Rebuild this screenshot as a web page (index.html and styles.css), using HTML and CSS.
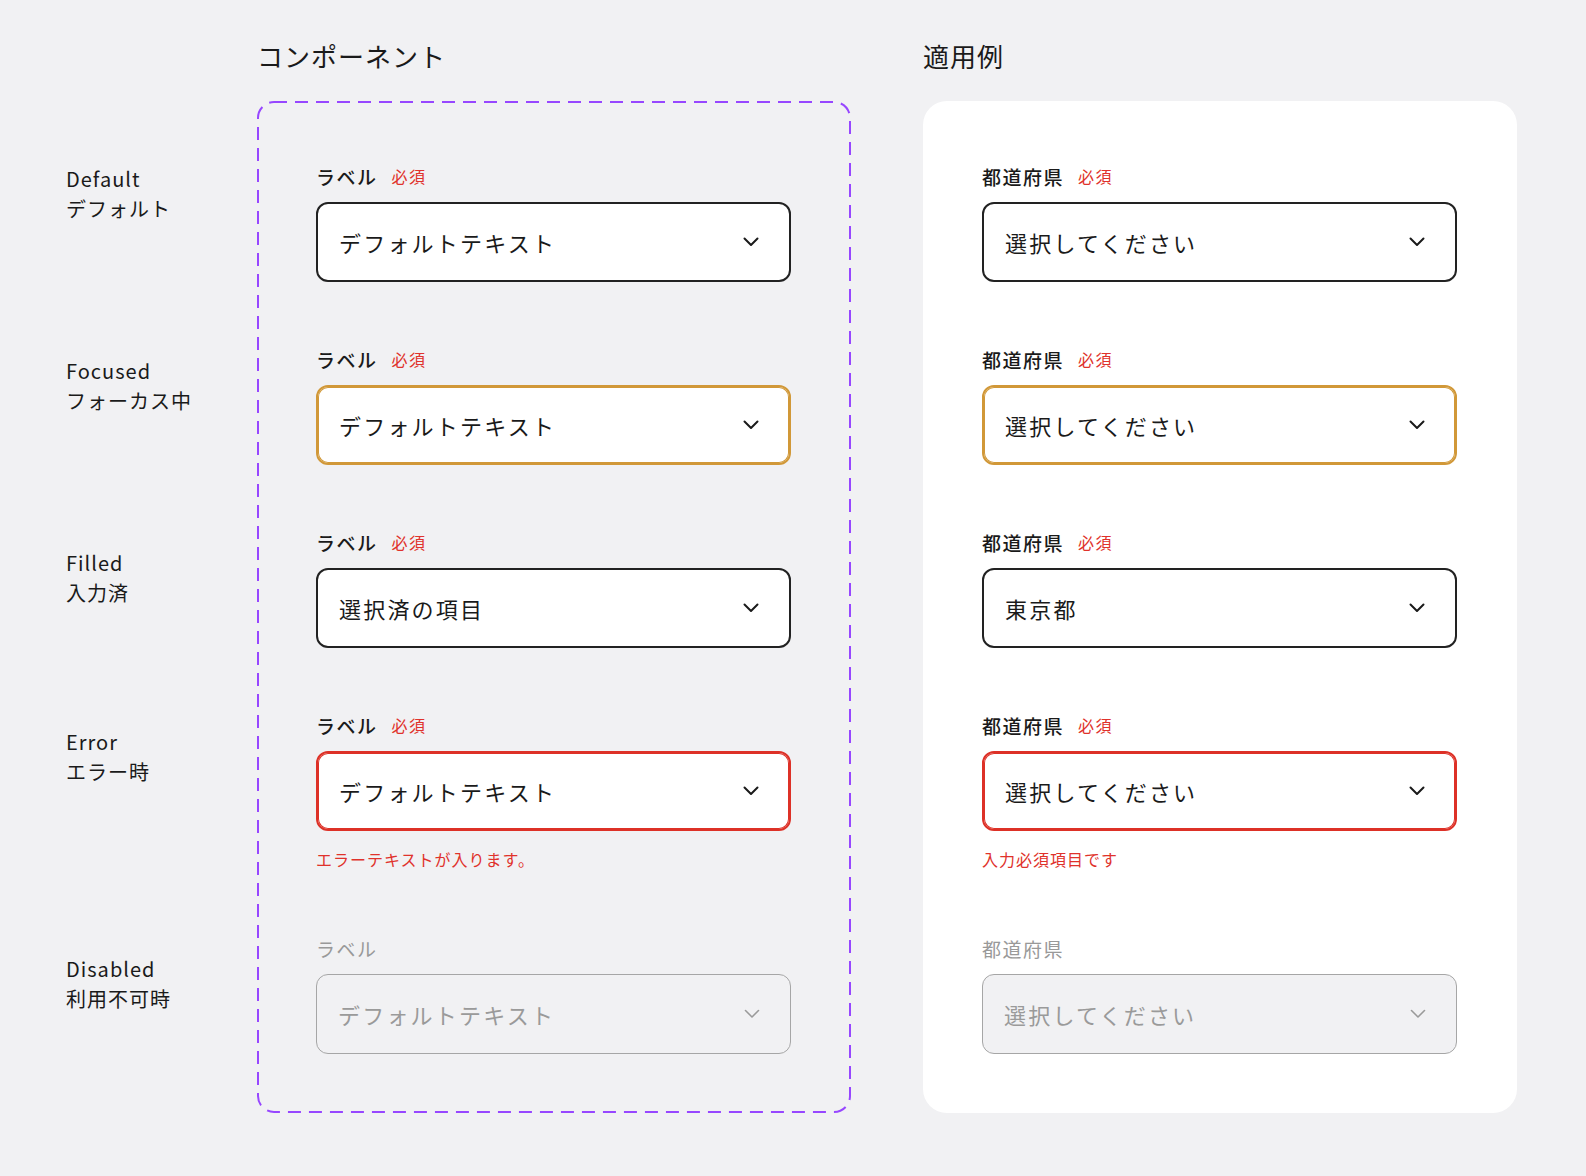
FILE: index.html
```html
<!DOCTYPE html>
<html lang="ja">
<head>
  <meta charset="UTF-8" />
  <meta name="viewport" content="width=device-width, initial-scale=1.0" />
  <title>Select - States</title>
  <link rel="stylesheet" href="styles.css">
</head>
<body>
  <div class="page">

    <div class="states">
      <div class="state state-default">
        <div>Default</div>
        <div>デフォルト</div>
      </div>
      <div class="state state-focused">
        <div>Focused</div>
        <div>フォーカス中</div>
      </div>
      <div class="state state-filled">
        <div>Filled</div>
        <div>入力済</div>
      </div>
      <div class="state state-error">
        <div>Error</div>
        <div>エラー時</div>
      </div>
      <div class="state">
        <div>Disabled</div>
        <div>利用不可時</div>
      </div>
    </div>

    <section class="column">
      <h2 class="column-title">コンポーネント</h2>
      <div class="frame frame-component">
        <!-- component set outline -->
        <svg class="frame-outline" width="594" height="1012"><rect x="1" y="1" width="592" height="1010" rx="16" ry="16" /></svg>
        <div class="field">
          <div class="field-label">ラベル<span class="required">必須</span></div>
          <div class="select">
            <span class="select-text">デフォルトテキスト</span>
            <svg class="chevron" width="16" height="10" viewBox="0 0 16 10"><path d="M1.5 1.5 L8 8 L14.5 1.5" /></svg>
          </div>
        </div>
        <div class="field">
          <div class="field-label">ラベル<span class="required">必須</span></div>
          <div class="select is-focused">
            <span class="select-text">デフォルトテキスト</span>
            <svg class="chevron" width="16" height="10" viewBox="0 0 16 10"><path d="M1.5 1.5 L8 8 L14.5 1.5" /></svg>
          </div>
        </div>
        <div class="field">
          <div class="field-label">ラベル<span class="required">必須</span></div>
          <div class="select">
            <span class="select-text">選択済の項目</span>
            <svg class="chevron" width="16" height="10" viewBox="0 0 16 10"><path d="M1.5 1.5 L8 8 L14.5 1.5" /></svg>
          </div>
        </div>
        <div class="field">
          <div class="field-label">ラベル<span class="required">必須</span></div>
          <div class="select is-error">
            <span class="select-text">デフォルトテキスト</span>
            <svg class="chevron" width="16" height="10" viewBox="0 0 16 10"><path d="M1.5 1.5 L8 8 L14.5 1.5" /></svg>
          </div>
          <div class="error-text">エラーテキストが入ります。</div>
        </div>
        <div class="field is-disabled">
          <div class="field-label">ラベル</div>
          <div class="select">
            <span class="select-text">デフォルトテキスト</span>
            <svg class="chevron" width="16" height="10" viewBox="0 0 16 10"><path d="M1.5 1.5 L8 8 L14.5 1.5" /></svg>
          </div>
        </div>
      </div>
    </section>

    <section class="column">
      <h2 class="column-title">適用例</h2>
      <div class="frame frame-example">
        <div class="field">
          <div class="field-label">都道府県<span class="required">必須</span></div>
          <div class="select">
            <span class="select-text">選択してください</span>
            <svg class="chevron" width="16" height="10" viewBox="0 0 16 10"><path d="M1.5 1.5 L8 8 L14.5 1.5" /></svg>
          </div>
        </div>
        <div class="field">
          <div class="field-label">都道府県<span class="required">必須</span></div>
          <div class="select is-focused">
            <span class="select-text">選択してください</span>
            <svg class="chevron" width="16" height="10" viewBox="0 0 16 10"><path d="M1.5 1.5 L8 8 L14.5 1.5" /></svg>
          </div>
        </div>
        <div class="field">
          <div class="field-label">都道府県<span class="required">必須</span></div>
          <div class="select">
            <span class="select-text">東京都</span>
            <svg class="chevron" width="16" height="10" viewBox="0 0 16 10"><path d="M1.5 1.5 L8 8 L14.5 1.5" /></svg>
          </div>
        </div>
        <div class="field">
          <div class="field-label">都道府県<span class="required">必須</span></div>
          <div class="select is-error">
            <span class="select-text">選択してください</span>
            <svg class="chevron" width="16" height="10" viewBox="0 0 16 10"><path d="M1.5 1.5 L8 8 L14.5 1.5" /></svg>
          </div>
          <div class="error-text">入力必須項目です</div>
        </div>
        <div class="field is-disabled">
          <div class="field-label">都道府県</div>
          <div class="select">
            <span class="select-text">選択してください</span>
            <svg class="chevron" width="16" height="10" viewBox="0 0 16 10"><path d="M1.5 1.5 L8 8 L14.5 1.5" /></svg>
          </div>
        </div>
      </div>
    </section>

  </div>
</body>
</html>
```

FILE: styles.css
```css
body {
  margin: 0;
  background: #f1f1f3;
  color: #1a1a1a;
  font-family: "Noto Sans CJK JP", "Noto Sans", sans-serif;
}
.page {
  display: flex;
  align-items: flex-start;
  padding: 37px 0 0 66px;
}

/* state names on the left */
.states {
  width: 191px;
  margin-top: 127px;
  display: flex;
  flex-direction: column;
}
.state {
  font-size: 20px;
  line-height: 30px;
  letter-spacing: 1px;
  color: #1a1a1a;
}
.state-default,
.state-focused {
  height: 192px;
}
.state-filled {
  height: 179px;
}
.state-error {
  height: 227px;
}

.column {
  width: 594px;
}
.column + .column {
  margin-left: 72px;
}
.column-title {
  margin: 0 0 26px;
  font-size: 26px;
  line-height: 38px;
  font-weight: 400;
  letter-spacing: 1px;
}

.frame {
  box-sizing: border-box;
  display: flex;
  flex-direction: column;
  gap: 63px;
  padding: 61px 60px 59px 59px;
  border-radius: 24px;
}
.frame-component {
  position: relative;
  height: 1012px;
}
.frame-outline {
  position: absolute;
  top: 0;
  left: 0;
  pointer-events: none;
}
.frame-outline rect {
  fill: none;
  stroke: #9747ff;
  stroke-width: 2;
  stroke-dasharray: 13 8;
}
.frame-example {
  background: #fff;
}

.field {
  display: flex;
  flex-direction: column;
}
.field-label {
  display: flex;
  align-items: center;
  height: 28px;
  margin-bottom: 12px;
  font-size: 19px;
  font-weight: 500;
  letter-spacing: 1.5px;
}
.required {
  margin-left: 14px;
  font-size: 16px;
  font-weight: 400;
  letter-spacing: 1.5px;
  color: #e0322b;
}

.select {
  box-sizing: border-box;
  display: flex;
  align-items: center;
  justify-content: space-between;
  height: 80px;
  padding: 0 30px 0 21px;
  background: #fff;
  border: 2px solid #222;
  border-radius: 12px;
}
.select-text {
  font-size: 22px;
  letter-spacing: 2.2px;
}
.chevron path {
  fill: none;
  stroke: #1a1a1a;
  stroke-width: 2;
  stroke-linecap: round;
  stroke-linejoin: round;
}
.select.is-focused {
  border-color: #d19838;
  box-shadow: inset 0 0 0 1px #d19838;
}
.select.is-error {
  border-color: #dd3127;
  box-shadow: inset 0 0 0 1px #dd3127;
}
.error-text {
  margin-top: 16px;
  font-size: 16px;
  line-height: 24px;
  letter-spacing: 1px;
  color: #e0322b;
}

.is-disabled .field-label {
  font-weight: 400;
  color: #999;
}
.is-disabled .select {
  background: #f1f1f3;
  border-color: #a6a6a6;
  border-width: 1.5px;
}
.is-disabled .select-text {
  color: #9a9a9a;
}
.is-disabled .chevron path {
  stroke: #9a9a9a;
  stroke-width: 1.6;
}
```
